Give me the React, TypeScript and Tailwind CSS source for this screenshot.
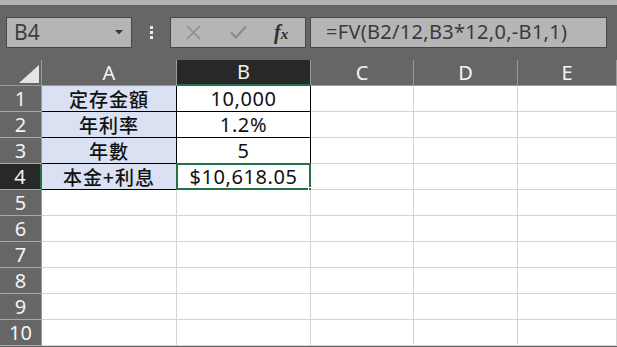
import React from 'react';

const UI_FONT = { fontFamily: '"Noto Sans", "Open Sans", sans-serif' };
const CJK_FONT = { fontFamily: '"Noto Sans CJK TC", "Noto Sans", sans-serif' };

const COLS = [
  { key: 'A', w: 'w-[135px]' },
  { key: 'B', w: 'w-[134px]' },
  { key: 'C', w: 'w-[103px]' },
  { key: 'D', w: 'w-[104px]' },
  { key: 'E', w: 'flex-1' },
];

const DATA: Record<number, [string, string]> = {
  1: ['定存金額', '10,000'],
  2: ['年利率', '1.2%'],
  3: ['年數', '5'],
  4: ['本金+利息', '$10,618.05'],
};

function Toolbar() {
  return (
    <div className="h-[55px] bg-[#666666] flex items-center pl-[6px] pb-[1px]">
      {/* name box */}
      <div className="w-[126px] h-[31px] bg-[#b5b5b5] border border-[#474747] flex items-center justify-between pl-[7px] pr-[8px]">
        <span className="text-[21px] text-[#3e3e3e] leading-none" style={UI_FONT}>B4</span>
        <svg width="8" height="5" viewBox="0 0 8 5"><path d="M0 0h8L4 4.5z" fill="#3a3a3a" /></svg>
      </div>
      {/* splitter dots */}
      <div className="w-[38px] flex flex-col items-center gap-[2px]">
        <span className="w-[3px] h-[3px] bg-[#ececec]" />
        <span className="w-[3px] h-[3px] bg-[#ececec]" />
        <span className="w-[3px] h-[3px] bg-[#ececec]" />
      </div>
      {/* cancel / enter / fx */}
      <div className="w-[136px] h-[31px] bg-[#b5b5b5] border border-[#474747] flex items-center">
        <svg className="ml-[15px]" width="15" height="15" viewBox="0 0 15 15">
          <path d="M1 1l13 13M14 1L1 14" stroke="#8c8c8c" strokeWidth="1.6" />
        </svg>
        <svg className="ml-[29px]" width="17" height="14" viewBox="0 0 17 14">
          <path d="M1 7.5l5 5L16 1.5" stroke="#8c8c8c" strokeWidth="2.2" fill="none" />
        </svg>
        <span
          className="ml-[27px] text-[20px] font-bold italic text-[#2e2e2e] leading-none"
          style={{ fontFamily: '"Liberation Serif", serif' }}
        >
          f<span className="text-[15px]">x</span>
        </span>
      </div>
      {/* formula */}
      <div className="ml-[4px] w-[297px] h-[31px] bg-[#b5b5b5] border border-[#474747] flex items-center pl-[15px]">
        <span className="text-[20px] text-[#3a3a3a] leading-none tracking-[0.3px]" style={UI_FONT}>=FV(B2/12,B3*12,0,-B1,1)</span>
      </div>
    </div>
  );
}

function HeaderRow() {
  return (
    <div className="flex h-[26px]">
      <div className="w-[42px] bg-[#666666] border-r border-b border-[#9a9a9a] flex items-end justify-end pr-[2px] pb-[2px]">
        <svg width="20" height="18" viewBox="0 0 20 18"><path d="M20 0V18H0z" fill="#e4e4e4" /></svg>
      </div>
      {COLS.map(c => {
        const sel = c.key === 'B';
        return (
          <div
            key={c.key}
            className={`${c.w} flex items-center justify-center text-[20px] leading-none ${
              sel ? 'bg-[#282828] border-b-2 border-b-[#217346] border-r border-r-[#9a9a9a] text-[#f2f2f2]' : 'bg-[#666666] border-r border-b border-[#9a9a9a] text-[#f4f4f4]'
            }`}
            style={UI_FONT}
          >
            {c.key}
          </div>
        );
      })}
    </div>
  );
}

function Row({ n }: { n: number }) {
  const d = DATA[n];
  const sel = n === 4;
  return (
    <div className="flex h-[26px]">
      <div
        className={`w-[42px] flex items-center justify-center text-[20px] leading-none border-b border-[#a8a8a8] ${
          sel ? 'bg-[#282828] border-r-2 border-r-[#217346] text-[#f2f2f2]' : 'bg-[#666666] border-r border-r-[#9a9a9a] text-[#f4f4f4]'
        }`}
        style={UI_FONT}
      >
        {n}
      </div>
      {COLS.map(c => {
        const inTable = !!d && (c.key === 'A' || c.key === 'B');
        let cls = 'bg-white border-r border-b border-[#d4d4d4]';
        if (inTable && c.key === 'A') cls = 'bg-[#d9e1f2] border-r border-b border-black font-medium text-[19px] tracking-[1px]';
        if (inTable && c.key === 'B') cls = 'bg-white border-r border-b border-black font-normal text-[20px] tracking-[0.6px]';
        const text = inTable ? (c.key === 'A' ? d[0] : d[1]) : '';
        return (
          <div
            key={c.key}
            className={`${c.w} ${cls} relative flex items-center justify-center text-[#111] leading-none`}
            style={c.key === 'A' ? CJK_FONT : UI_FONT}
          >
            <span>{text}</span>
            {sel && c.key === 'B' && (
              <>
                <div className="absolute -left-[1px] -top-[1px] right-[-1px] bottom-[-1px] border-2 border-[#217346]" />
                <div className="absolute -right-[4px] -bottom-[4px] w-[6px] h-[6px] bg-[#217346] border border-white" />
              </>
            )}
          </div>
        );
      })}
    </div>
  );
}

export default function App() {
  return (
    <div className="w-[617px] h-[347px] overflow-hidden bg-[#666666]">
      <div className="h-[5px] bg-[#b3b3b3]" />
      <Toolbar />
      <HeaderRow />
      {[1, 2, 3, 4, 5, 6, 7, 8, 9, 10].map(n => (
        <Row key={n} n={n} />
      ))}
    </div>
  );
}
